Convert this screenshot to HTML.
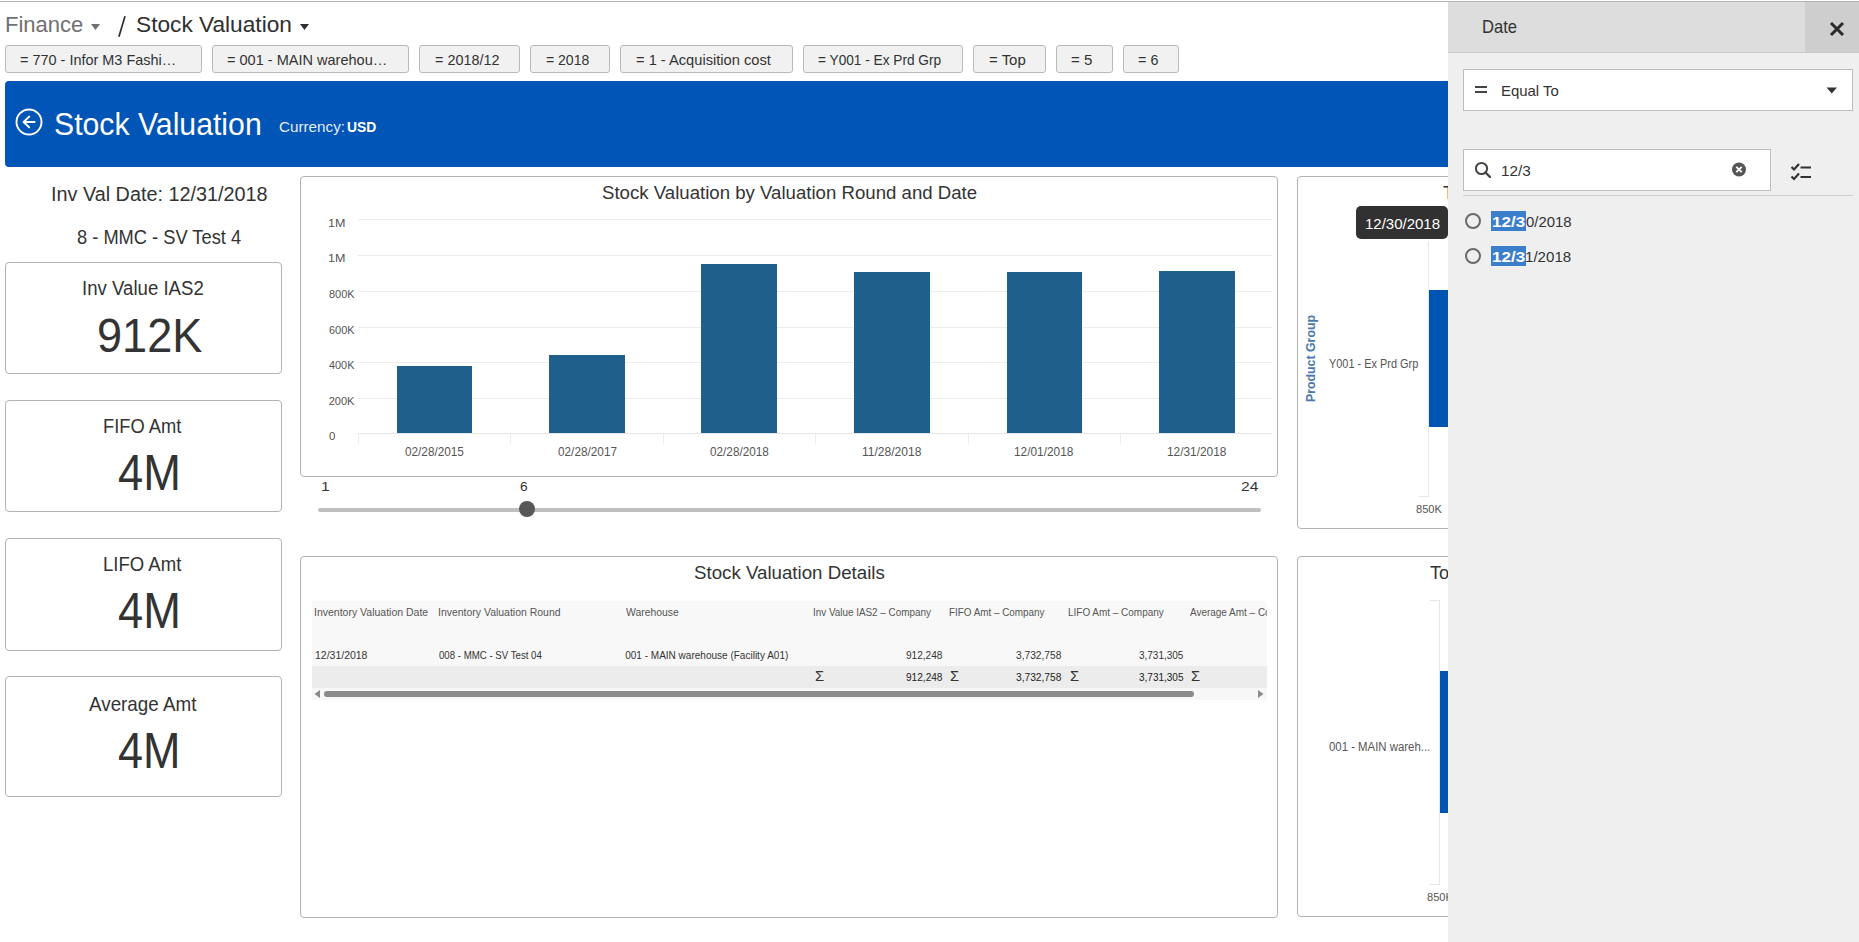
<!DOCTYPE html>
<html><head><meta charset="utf-8"><title>Stock Valuation</title>
<style>
html,body{margin:0;padding:0;width:1859px;height:942px;overflow:hidden;background:#fff;font-family:"Liberation Sans",sans-serif;}
.a{position:absolute;box-sizing:border-box;}
.t{position:absolute;white-space:nowrap;line-height:1;transform-origin:0 0;font-family:"Liberation Sans",sans-serif;}
.pill{position:absolute;box-sizing:border-box;top:45px;height:28px;background:#f1f1f1;border:1px solid #b9b9b9;border-radius:3px;}
.card{position:absolute;box-sizing:border-box;left:5px;width:277px;border:1px solid #b3b3b3;border-radius:4px;background:#fff;}
.panel{position:absolute;box-sizing:border-box;border:1px solid #b3b3b3;border-radius:4px;background:#fff;}
.grid{position:absolute;left:358px;width:914px;height:1px;background:#ececec;}
.bar{position:absolute;background:#1f5f8b;}
.tick{position:absolute;width:1px;height:10px;top:434px;background:#ebebeb;}
</style></head><body>
<div class="a" style="left:0;top:1px;width:1859px;height:1px;background:#b4b4b4"></div>
<!-- breadcrumb carets -->
<svg class="a" style="left:90px;top:23px" width="11" height="8"><path d="M1 1 L10 1 L5.5 7 Z" fill="#707070"/></svg>
<svg class="a" style="left:299px;top:23px" width="11" height="8"><path d="M1 1 L10 1 L5.5 7 Z" fill="#2f2f2f"/></svg>
<svg class="a" style="left:115px;top:14px" width="14" height="26"><path d="M10 2.3 L3.9 22.8" stroke="#2f2f2f" stroke-width="1.7" stroke-linecap="butt"/></svg>
<!-- pills -->
<div class="pill" style="left:5px;width:197px"></div>
<div class="pill" style="left:212px;width:197px"></div>
<div class="pill" style="left:419px;width:101px"></div>
<div class="pill" style="left:530px;width:80px"></div>
<div class="pill" style="left:620px;width:173px"></div>
<div class="pill" style="left:803px;width:160px"></div>
<div class="pill" style="left:973px;width:73px"></div>
<div class="pill" style="left:1056px;width:57px"></div>
<div class="pill" style="left:1123px;width:56px"></div>
<!-- banner -->
<div class="a" style="left:5px;top:81px;width:1480px;height:86px;background:#0055b6;border-radius:4px"></div>
<svg class="a" style="left:14px;top:107px" width="30" height="30"><circle cx="15" cy="15" r="12.5" fill="none" stroke="#fff" stroke-width="1.9"/><path d="M20.6 15 H9.8 M15.2 9.6 L9.6 15 L15.2 20.4" fill="none" stroke="#fff" stroke-width="2" stroke-linecap="round" stroke-linejoin="round"/></svg>
<!-- cards -->
<div class="card" style="top:262px;height:112px"></div>
<div class="card" style="top:400px;height:112px"></div>
<div class="card" style="top:538px;height:113px"></div>
<div class="card" style="top:676px;height:121px"></div>
<!-- chart panel -->
<div class="panel" style="left:300px;top:176px;width:978px;height:301px"></div>
<div class="grid" style="top:219px"></div>
<div class="grid" style="top:255px"></div>
<div class="grid" style="top:291px"></div>
<div class="grid" style="top:327px"></div>
<div class="grid" style="top:362px"></div>
<div class="grid" style="top:398px"></div>
<div class="grid" style="top:433px;background:#e6e6e6"></div>
<div class="tick" style="left:358px"></div>
<div class="tick" style="left:510px"></div>
<div class="tick" style="left:663px"></div>
<div class="tick" style="left:815px"></div>
<div class="tick" style="left:968px"></div>
<div class="tick" style="left:1120px"></div>

<div class="bar" style="left:397px;top:366px;width:75px;height:67px"></div>
<div class="bar" style="left:549px;top:355px;width:76px;height:78px"></div>
<div class="bar" style="left:701px;top:264px;width:76px;height:169px"></div>
<div class="bar" style="left:854px;top:272px;width:76px;height:161px"></div>
<div class="bar" style="left:1007px;top:272px;width:75px;height:161px"></div>
<div class="bar" style="left:1159px;top:271px;width:76px;height:162px"></div>
<!-- slider -->
<div class="a" style="left:318px;top:508px;width:943px;height:4px;background:#bfbfbf;border-radius:2px"></div>
<div class="a" style="left:519px;top:501px;width:16px;height:16px;background:#575757;border-radius:50%"></div>
<!-- right top panel -->
<div class="panel" style="left:1297px;top:176px;width:300px;height:353px"></div>
<svg class="a" style="left:1300px;top:300px" width="24" height="110"><text transform="translate(15,102) rotate(-90)" font-family="Liberation Sans" font-weight="bold" font-size="12.5" fill="#4a78b0" textLength="87" lengthAdjust="spacingAndGlyphs">Product Group</text></svg>
<div class="a" style="left:1428px;top:241px;width:1px;height:256px;background:#e6e6e6"></div>
<div class="a" style="left:1419px;top:496px;width:10px;height:1px;background:#e6e6e6"></div>
<div class="bar" style="left:1429px;top:290px;width:40px;height:137px;background:#0054b1"></div>
<div class="a" style="left:1356px;top:206px;width:92px;height:33px;background:#313131;border-radius:5px"></div>
<!-- details panel -->
<div class="panel" style="left:300px;top:556px;width:978px;height:362px"></div>
<div class="a" style="left:312px;top:601px;width:955px;height:65px;background:#f8f8f8"></div>
<div class="a" style="left:312px;top:666px;width:955px;height:22px;background:#ececec"></div>
<div class="a" style="left:312px;top:688px;width:955px;height:12px;background:#f7f7f7"></div>
<div class="a" style="left:324px;top:691px;width:870px;height:6px;background:#8a8a8a;border-radius:3px"></div>
<svg class="a" style="left:313px;top:689px" width="8" height="10"><path d="M7 1 L1.5 5 L7 9 Z" fill="#8a8a8a"/></svg>
<svg class="a" style="left:1257px;top:689px" width="8" height="10"><path d="M1 1 L6.5 5 L1 9 Z" fill="#8a8a8a"/></svg>
<!-- sigma -->
<div class="t" style="left:814.5px;top:668.5px;font-size:14px;color:#333;transform:scaleX(1.05)">&Sigma;</div>
<div class="t" style="left:949.5px;top:668.5px;font-size:14px;color:#333;transform:scaleX(1.05)">&Sigma;</div>
<div class="t" style="left:1069.5px;top:668.5px;font-size:14px;color:#333;transform:scaleX(1.05)">&Sigma;</div>
<div class="t" style="left:1191px;top:668.5px;font-size:14px;color:#333;transform:scaleX(1.05)">&Sigma;</div>
<!-- average col header clipped -->
<div class="a" style="left:1190px;top:600px;width:77px;height:20px;overflow:hidden"><div class="t" style="left:0.3px;top:6.68px;font-size:10.61px;color:#555;transform:scaleX(0.9385)">Average Amt &ndash; Company</div></div>
<!-- right bottom panel -->
<div class="panel" style="left:1297px;top:556px;width:300px;height:361px"></div>
<div class="a" style="left:1439px;top:600px;width:1px;height:284px;background:#e6e6e6"></div>
<div class="a" style="left:1430px;top:600px;width:10px;height:1px;background:#e6e6e6"></div>
<div class="a" style="left:1430px;top:884px;width:10px;height:1px;background:#e6e6e6"></div>
<div class="bar" style="left:1440px;top:671px;width:40px;height:142px;background:#0054b1"></div>

<div class="t" style="left:4.74px;top:13.48px;font-size:22.97px;color:#707070;transform:scaleX(0.9591);">Finance</div>
<div class="t" style="left:135.89px;top:13.48px;font-size:22.97px;color:#2f2f2f;transform:scaleX(0.9874);">Stock Valuation</div>
<div class="t" style="left:20.12px;top:51.55px;font-size:15.12px;color:#333;transform:scaleX(0.9562);">= 770 - Infor M3 Fashi…</div>
<div class="t" style="left:227.32px;top:51.55px;font-size:15.12px;color:#333;transform:scaleX(0.9616);">= 001 - MAIN warehou…</div>
<div class="t" style="left:434.92px;top:51.55px;font-size:15.12px;color:#333;transform:scaleX(0.9523);">= 2018/12</div>
<div class="t" style="left:546.14px;top:51.55px;font-size:15.12px;color:#333;transform:scaleX(0.9274);">= 2018</div>
<div class="t" style="left:635.91px;top:51.55px;font-size:15.12px;color:#333;transform:scaleX(0.9697);">= 1 - Acquisition cost</div>
<div class="t" style="left:818.45px;top:51.55px;font-size:15.12px;color:#333;transform:scaleX(0.9042);">= Y001 - Ex Prd Grp</div>
<div class="t" style="left:988.50px;top:51.55px;font-size:15.12px;color:#333;transform:scaleX(0.9904);">= Top</div>
<div class="t" style="left:1071.20px;top:51.55px;font-size:15.12px;color:#333;transform:scaleX(0.9959);">= 5</div>
<div class="t" style="left:1138.32px;top:51.55px;font-size:15.12px;color:#333;transform:scaleX(0.9515);">= 6</div>
<div class="t" style="left:53.69px;top:108.64px;font-size:31.83px;color:#ffffff;transform:scaleX(0.9492);">Stock Valuation</div>
<div class="t" style="left:278.94px;top:119.28px;font-size:15.55px;color:#e6ecf5;transform:scaleX(0.9790);">Currency:</div>
<div class="t" style="left:346.67px;top:119.28px;font-size:15.55px;color:#ffffff;font-weight:bold;transform:scaleX(0.8916);">USD</div>
<div class="t" style="left:50.62px;top:185.37px;font-size:19.91px;color:#333;transform:scaleX(0.9953);">Inv Val Date: 12/31/2018</div>
<div class="t" style="left:76.77px;top:227.08px;font-size:20.49px;color:#333;transform:scaleX(0.8918);">8 - MMC - SV Test 4</div>
<div class="t" style="left:82.22px;top:278.57px;font-size:19.91px;color:#333;transform:scaleX(0.9354);">Inv Value IAS2</div>
<div class="t" style="left:96.60px;top:310.96px;font-size:48.98px;color:#333;transform:scaleX(0.9207);">912K</div>
<div class="t" style="left:103.44px;top:416.40px;font-size:20.35px;color:#333;transform:scaleX(0.8997);">FIFO Amt</div>
<div class="t" style="left:118.00px;top:447.82px;font-size:49.27px;color:#333;transform:scaleX(0.9176);">4M</div>
<div class="t" style="left:103.42px;top:555.37px;font-size:19.91px;color:#333;transform:scaleX(0.9313);">LIFO Amt</div>
<div class="t" style="left:118.00px;top:585.72px;font-size:49.27px;color:#333;transform:scaleX(0.9176);">4M</div>
<div class="t" style="left:89.40px;top:693.63px;font-size:20.20px;color:#333;transform:scaleX(0.9325);">Average Amt</div>
<div class="t" style="left:118.10px;top:725.69px;font-size:49.42px;color:#333;transform:scaleX(0.9102);">4M</div>
<div class="t" style="left:601.76px;top:184.26px;font-size:18.75px;color:#333;transform:scaleX(0.9932);">Stock Valuation by Valuation Round and Date</div>
<div class="t" style="left:328.32px;top:217.91px;font-size:11.05px;color:#555;transform:scaleX(1.1333);">1M</div>
<div class="t" style="left:328.32px;top:252.51px;font-size:11.05px;color:#555;transform:scaleX(1.1333);">1M</div>
<div class="t" style="left:328.76px;top:289.21px;font-size:11.05px;color:#555;transform:scaleX(0.9889);">800K</div>
<div class="t" style="left:328.65px;top:324.91px;font-size:11.05px;color:#555;transform:scaleX(0.9933);">600K</div>
<div class="t" style="left:328.98px;top:360.31px;font-size:11.05px;color:#555;transform:scaleX(0.9843);">400K</div>
<div class="t" style="left:328.65px;top:396.01px;font-size:11.05px;color:#555;">200K</div>
<div class="t" style="left:328.86px;top:431.31px;font-size:11.05px;color:#555;transform:scaleX(1.0346);">0</div>
<div class="t" style="left:405.25px;top:447.37px;font-size:11.92px;color:#555;transform:scaleX(0.9887);">02/28/2015</div>
<div class="t" style="left:557.60px;top:447.37px;font-size:11.92px;color:#555;transform:scaleX(0.9907);">02/28/2017</div>
<div class="t" style="left:709.90px;top:447.37px;font-size:11.92px;color:#555;transform:scaleX(0.9887);">02/28/2018</div>
<div class="t" style="left:861.81px;top:447.37px;font-size:11.92px;color:#555;transform:scaleX(1.0121);">11/28/2018</div>
<div class="t" style="left:1014.32px;top:447.37px;font-size:11.92px;color:#555;transform:scaleX(0.9968);">12/01/2018</div>
<div class="t" style="left:1166.77px;top:447.37px;font-size:11.92px;color:#555;transform:scaleX(0.9968);">12/31/2018</div>
<div class="t" style="left:320.90px;top:480.18px;font-size:13.08px;color:#333;transform:scaleX(1.1988);">1</div>
<div class="t" style="left:519.81px;top:480.18px;font-size:13.08px;color:#333;transform:scaleX(1.0572);">6</div>
<div class="t" style="left:1240.82px;top:480.18px;font-size:13.08px;color:#333;transform:scaleX(1.1878);">24</div>
<div class="t" style="left:1329.38px;top:356.63px;font-size:13.37px;color:#555;transform:scaleX(0.8184);">Y001 - Ex Prd Grp</div>
<div class="t" style="left:1415.56px;top:502.72px;font-size:11.63px;color:#555;transform:scaleX(0.9545);">850K</div>
<div class="t" style="left:1364.95px;top:216.82px;font-size:14.68px;color:#ffffff;transform:scaleX(1.0220);">12/30/2018</div>
<div class="t" style="left:693.75px;top:564.26px;font-size:18.75px;color:#333;transform:scaleX(0.9968);">Stock Valuation Details</div>
<div class="t" style="left:314.45px;top:606.68px;font-size:10.61px;color:#555;transform:scaleX(0.9897);">Inventory Valuation Date</div>
<div class="t" style="left:438.06px;top:606.68px;font-size:10.61px;color:#555;transform:scaleX(0.9860);">Inventory Valuation Round</div>
<div class="t" style="left:625.50px;top:606.68px;font-size:10.61px;color:#555;transform:scaleX(0.9816);">Warehouse</div>
<div class="t" style="left:813.21px;top:606.68px;font-size:10.61px;color:#555;transform:scaleX(0.9311);">Inv Value IAS2 – Company</div>
<div class="t" style="left:948.51px;top:606.68px;font-size:10.61px;color:#555;transform:scaleX(0.9303);">FIFO Amt – Company</div>
<div class="t" style="left:1067.70px;top:606.68px;font-size:10.61px;color:#555;transform:scaleX(0.9385);">LIFO Amt – Company</div>
<div class="t" style="left:315.07px;top:650.98px;font-size:10.03px;color:#333;transform:scaleX(1.0462);">12/31/2018</div>
<div class="t" style="left:438.71px;top:650.98px;font-size:10.03px;color:#333;transform:scaleX(0.9639);">008 - MMC - SV Test 04</div>
<div class="t" style="left:625.20px;top:650.98px;font-size:10.03px;color:#333;">001 - MAIN warehouse (Facility A01)</div>
<div class="t" style="left:905.80px;top:650.98px;font-size:10.03px;color:#333;transform:scaleX(1.0060);">912,248</div>
<div class="t" style="left:1016.19px;top:650.98px;font-size:10.03px;color:#333;transform:scaleX(1.0170);">3,732,758</div>
<div class="t" style="left:1139.10px;top:650.98px;font-size:10.03px;color:#333;transform:scaleX(0.9965);">3,731,305</div>
<div class="t" style="left:905.80px;top:673.30px;font-size:10.47px;color:#222;transform:scaleX(0.9640);">912,248</div>
<div class="t" style="left:1016.19px;top:673.30px;font-size:10.47px;color:#222;transform:scaleX(0.9746);">3,732,758</div>
<div class="t" style="left:1139.10px;top:673.30px;font-size:10.47px;color:#222;transform:scaleX(0.9550);">3,731,305</div>
<div class="t" style="left:1329.36px;top:739.81px;font-size:13.52px;color:#555;transform:scaleX(0.8423);">001 - MAIN wareh...</div>
<div class="t" style="left:1426.56px;top:891.31px;font-size:11.63px;color:#555;transform:scaleX(0.9545);">850K</div>
<div class="t" style="left:1429.64px;top:564.26px;font-size:18.75px;color:#333;transform:scaleX(0.9700);">To</div>
<div class="t" style="left:1443.04px;top:184.26px;font-size:18.75px;color:#333;transform:scaleX(0.9700);">T</div>
<div class="a" style="left:1448px;top:2px;width:411px;height:940px;background:#efefef"></div>
<div class="a" style="left:1448px;top:2px;width:411px;height:51px;background:#dddddd;border-bottom:1px solid #c8c8c8"></div>
<div class="a" style="left:1805px;top:2px;width:54px;height:50px;background:#cecece"></div>
<svg class="a" style="left:1828px;top:20px" width="18" height="18"><path d="M3 3 L15 15 M15 3 L3 15" stroke="#2a2a2a" stroke-width="3" stroke-linecap="butt"/></svg>
<div class="a" style="left:1463px;top:69px;width:390px;height:42px;background:#fff;border:1px solid #bdbdbd"></div>
<div class="a" style="left:1475px;top:86px;width:12px;height:2px;background:#444"></div>
<div class="a" style="left:1475px;top:91px;width:12px;height:2px;background:#444"></div>
<svg class="a" style="left:1826px;top:87px" width="12" height="7"><path d="M0.5 0.5 L11 0.5 L5.75 6.5 Z" fill="#333"/></svg>
<div class="a" style="left:1463px;top:149px;width:308px;height:42px;background:#fff;border:1px solid #bdbdbd"></div>
<svg class="a" style="left:1473px;top:160px" width="20" height="20"><circle cx="8.5" cy="8.5" r="5.6" fill="none" stroke="#444" stroke-width="2"/><path d="M12.5 12.5 L17 17" stroke="#444" stroke-width="2.4" stroke-linecap="round"/></svg>
<svg class="a" style="left:1731px;top:161px" width="17" height="17"><circle cx="8" cy="8.5" r="7" fill="#555"/><path d="M5.3 5.8 L10.7 11.2 M10.7 5.8 L5.3 11.2" stroke="#fff" stroke-width="1.8"/></svg>
<svg class="a" style="left:1789px;top:161px" width="25" height="21"><path d="M2.5 6 L5 8.5 L10 3 M2.5 15.5 L5 18 L10 12.5" fill="none" stroke="#333" stroke-width="2.2"/><path d="M11.5 6.5 H22 M11.5 16 H22" stroke="#333" stroke-width="2.2"/></svg>
<div class="a" style="left:1463px;top:195px;width:390px;height:1px;background:#cfcfcf"></div>
<div class="a" style="left:1465px;top:213px;width:16px;height:16px;border:2px solid #6a6a6a;border-radius:50%"></div>
<div class="a" style="left:1465px;top:248px;width:16px;height:16px;border:2px solid #6a6a6a;border-radius:50%"></div>
<div class="a" style="left:1491px;top:211px;width:35px;height:20px;background:#3b7ecb"></div>
<div class="a" style="left:1491px;top:246px;width:35px;height:20px;background:#3b7ecb"></div>

<div class="t" style="left:1481.67px;top:18.65px;font-size:17.59px;color:#333;transform:scaleX(0.9457);">Date</div>
<div class="t" style="left:1500.60px;top:83.08px;font-size:15.55px;color:#333;transform:scaleX(0.9605);">Equal To</div>
<div class="t" style="left:1500.63px;top:162.85px;font-size:15.12px;color:#333;transform:scaleX(1.0138);">12/3</div>
<div class="t" style="left:1491.98px;top:214.87px;font-size:14.97px;color:#ffffff;font-weight:bold;transform:scaleX(1.1373);">12/3</div>
<div class="t" style="left:1525.95px;top:214.87px;font-size:14.97px;color:#333;transform:scaleX(0.9955);">0/2018</div>
<div class="t" style="left:1491.98px;top:249.87px;font-size:14.97px;color:#ffffff;font-weight:bold;transform:scaleX(1.1373);">12/3</div>
<div class="t" style="left:1525.34px;top:249.87px;font-size:14.97px;color:#333;transform:scaleX(1.0090);">1/2018</div>
</body></html>
